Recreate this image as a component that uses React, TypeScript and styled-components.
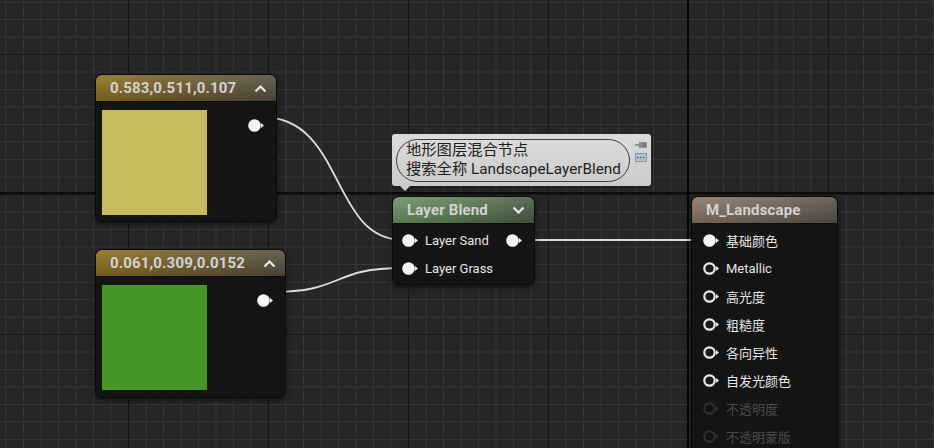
import styled, { createGlobalStyle } from "styled-components";

const GlobalStyle = createGlobalStyle`
  html, body {
    margin: 0;
    padding: 0;
    background: #262626;
  }
  body {
    font-family: Roboto, "Noto Sans CJK SC", sans-serif;
  }
`;

const Canvas = styled.div`
  position: relative;
  width: 934px;
  height: 448px;
  overflow: hidden;
  background-color: #262626;
  background-image:
    linear-gradient(to right, transparent 687px, #050505 687px, #050505 689px, transparent 689px),
    linear-gradient(to bottom, transparent 192px, #0c0c0c 192px, #0c0c0c 194px, transparent 194px),
    linear-gradient(to right, #171717 0 1.5px, transparent 1.5px),
    linear-gradient(to bottom, #171717 0 1.5px, transparent 1.5px),
    linear-gradient(to right, #363636 0 1px, transparent 1px),
    linear-gradient(to bottom, #363636 0 1px, transparent 1px);
  background-size: 100% 100%, 100% 100%, 140px 100%, 100% 140px, 17.5px 100%, 100% 17.5px;
  background-position: 0 0, 0 0, 128px 0, 0 54px, 5.5px 0, 0 1.5px;
  background-repeat: no-repeat, no-repeat, repeat, repeat, repeat, repeat;
`;

const Wires = styled.svg`
  position: absolute;
  left: 0;
  top: 0;
  pointer-events: none;
`;

const Node = styled.div<{ $x: number; $y: number; $w: number; $h?: number }>`
  position: absolute;
  left: ${(p) => p.$x}px;
  top: ${(p) => p.$y}px;
  width: ${(p) => p.$w}px;
  height: ${(p) => (p.$h ? `${p.$h}px` : "auto")};
  display: flex;
  flex-direction: column;
  background: #131413;
  border: 1px solid #0a0a0a;
  border-radius: 7px;
  box-shadow: 0 2px 6px rgba(0, 0, 0, 0.55);
  overflow: hidden;
`;

const headerTints = {
  gold: "linear-gradient(to right, #8f7220 0%, #76612a 40%, #575042 100%)",
  green: "linear-gradient(to right, #6e9465 0%, #5d7d55 50%, #4b5e48 100%)",
  brown: "linear-gradient(to right, #8c7866 0%, #75685b 50%, #5a534c 100%)",
};

const Header = styled.div<{ $tint: keyof typeof headerTints }>`
  height: 26px;
  flex: none;
  display: flex;
  align-items: center;
  justify-content: space-between;
  padding: 0 9px 0 14px;
  background:
    linear-gradient(to bottom, rgba(255, 255, 255, 0.1), rgba(0, 0, 0, 0.18)),
    ${(p) => headerTints[p.$tint]};
  border-bottom: 1px solid #0c0c0c;
`;

const Title = styled.span`
  font-family: Roboto, "Noto Sans CJK SC", sans-serif;
  font-weight: 700;
  font-size: 15px;
  color: #d2d2d2;
  letter-spacing: 0.15px;
`;

const ColorBody = styled.div`
  flex: 1;
  display: flex;
  justify-content: space-between;
  align-items: flex-start;
  padding: 8px 11px 0 6px;
`;

const Swatch = styled.div<{ $color: string }>`
  width: 105px;
  height: 105px;
  background: ${(p) => p.$color};
`;

const OutPin = styled.div`
  margin-top: 9px;
  display: flex;
`;

const PinBody = styled.div`
  display: flex;
  flex-direction: column;
  padding: 2px 0 2px;
`;

const Row = styled.div<{ $pad: number }>`
  height: 28px;
  display: flex;
  align-items: center;
  justify-content: space-between;
  padding: 0 11px 0 ${(p) => p.$pad}px;
`;

const PinLabel = styled.div`
  display: flex;
  align-items: center;
  gap: 6px;
`;

const Label = styled.span<{ $dim?: boolean }>`
  font-family: Roboto, "Noto Sans CJK SC", sans-serif;
  font-size: 13px;
  color: ${(p) => (p.$dim ? "#4a4a4a" : "#e6e6e6")};
`;

const Comment = styled.div`
  position: absolute;
  left: 392px;
  top: 134px;
  width: 259px;
  height: 52px;
  box-sizing: border-box;
  display: flex;
  align-items: stretch;
  gap: 5px;
  padding: 5px 5px 4px 4px;
  border-radius: 3px;
  background: linear-gradient(to bottom, #dcdcdc, #cbcbcb);
  box-shadow: 0 1px 3px rgba(0, 0, 0, 0.5);

  &::after {
    content: "";
    position: absolute;
    left: 8px;
    bottom: -5px;
    border-left: 5px solid transparent;
    border-right: 5px solid transparent;
    border-top: 5px solid #cbcbcb;
  }
`;

const Bubble = styled.div`
  flex: 1;
  box-sizing: border-box;
  border: 1px solid #3c3c3c;
  border-radius: 22px;
  padding: 1px 8px 0 9px;
  font-family: Roboto, "Noto Sans CJK SC", sans-serif;
  font-size: 15.3px;
  line-height: 18.5px;
  color: #1e1e1e;
  white-space: nowrap;
`;

const CommentTools = styled.div`
  display: flex;
  flex-direction: column;
  gap: 3px;
  padding-top: 1px;
`;

type PinKind = "filled" | "hollow" | "off";

const Pin = ({ kind = "filled" }: { kind?: PinKind }) => {
  const stroke = kind === "off" ? "#2e2e2e" : "#ececec";
  const fill = kind === "filled" ? "#f4f4f4" : kind === "hollow" ? "#1b1b1b" : "#111";
  return (
    <svg width="17" height="13" viewBox="0 0 17 13">
      <circle
        cx="6.5"
        cy="6.5"
        r={kind === "filled" ? 6.3 : 5.2}
        fill={fill}
        stroke={kind === "filled" ? "none" : stroke}
        strokeWidth="2.2"
      />
      <path d="M13 4 L16 6.5 L13 9 Z" fill={stroke} />
    </svg>
  );
};

const Chevron = ({ up }: { up?: boolean }) => (
  <svg width="13" height="9" viewBox="0 0 13 9">
    <polyline
      points={up ? "1.5,7.5 6.5,2.5 11.5,7.5" : "1.5,1.5 6.5,6.5 11.5,1.5"}
      fill="none"
      stroke="#ececec"
      strokeWidth="2.2"
    />
  </svg>
);

const ColorNode = ({ x, y, w, h, label, color }: { x: number; y: number; w: number; h: number; label: string; color: string }) => (
  <Node $x={x} $y={y} $w={w} $h={h}>
    <Header $tint="gold">
      <Title>{label}</Title>
      <Chevron up />
    </Header>
    <ColorBody>
      <Swatch $color={color} />
      <OutPin>
        <Pin />
      </OutPin>
    </ColorBody>
  </Node>
);

const outputs: { label: string; kind: PinKind }[] = [
  { label: "基础颜色", kind: "filled" },
  { label: "Metallic", kind: "hollow" },
  { label: "高光度", kind: "hollow" },
  { label: "粗糙度", kind: "hollow" },
  { label: "各向异性", kind: "hollow" },
  { label: "自发光颜色", kind: "hollow" },
  { label: "不透明度", kind: "off" },
  { label: "不透明蒙版", kind: "off" },
];

export default function App() {
  return (
    <>
      <GlobalStyle />
      <Canvas>
        <Wires width="934" height="448">
          <g fill="none" stroke="#dcdcdc" strokeWidth="1.8">
            <path d="M262 117 C 345 117, 330 240, 403 240" />
            <path d="M272 292 C 345 292, 330 268, 403 268" />
            <path d="M520 240 L 704 240" />
          </g>
        </Wires>

        <ColorNode x={95} y={74} w={180} h={146} label="0.583,0.511,0.107" color="#c8bb5e" />
        <ColorNode x={95} y={249} w={189} h={147} label="0.061,0.309,0.0152" color="#479628" />

        <Comment>
          <Bubble>
            地形图层混合节点
            <br />
            搜索全称 LandscapeLayerBlend
          </Bubble>
          <CommentTools>
            <svg width="12" height="10" viewBox="0 0 12 10">
              <path d="M0 5 H5 M5 2 V8 M7 3 H11 V7 H7 Z" stroke="#7c7c7c" strokeWidth="1.6" fill="#7c7c7c" />
            </svg>
            <svg width="12" height="9" viewBox="0 0 12 9">
              <rect x="0.5" y="0.5" width="11" height="8" fill="#b9c3cc" stroke="#8c96a0" />
              <path d="M2 4.5 H3.5 M5 4.5 H6.5 M8 4.5 H9.5" stroke="#56606a" strokeWidth="1.4" />
            </svg>
          </CommentTools>
        </Comment>

        <Node $x={392} $y={196} $w={141}>
          <Header $tint="green">
            <Title>Layer Blend</Title>
            <Chevron />
          </Header>
          <PinBody>
            <Row $pad={9}>
              <PinLabel>
                <Pin />
                <Label>Layer Sand</Label>
              </PinLabel>
              <Pin />
            </Row>
            <Row $pad={9}>
              <PinLabel>
                <Pin />
                <Label>Layer Grass</Label>
              </PinLabel>
            </Row>
          </PinBody>
        </Node>

        <Node $x={691} $y={196} $w={145} $h={290}>
          <Header $tint="brown">
            <Title>M_Landscape</Title>
          </Header>
          <PinBody>
            {outputs.map((o) => (
              <Row key={o.label} $pad={11}>
                <PinLabel>
                  <Pin kind={o.kind} />
                  <Label $dim={o.kind === "off"}>{o.label}</Label>
                </PinLabel>
              </Row>
            ))}
          </PinBody>
        </Node>
      </Canvas>
    </>
  );
}
